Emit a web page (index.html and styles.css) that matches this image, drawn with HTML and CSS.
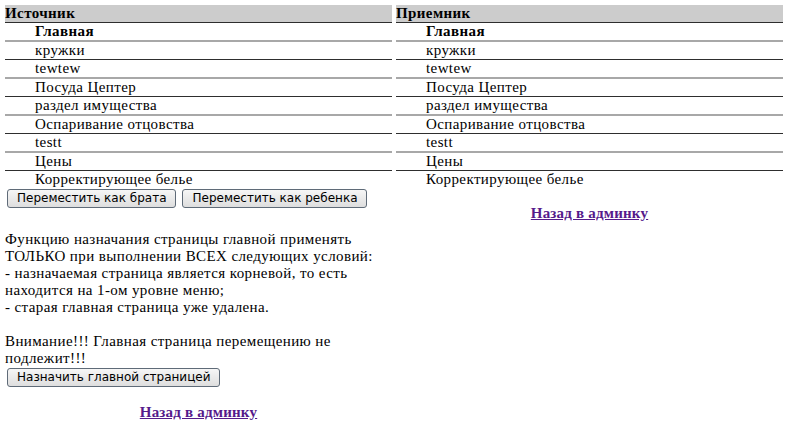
FILE: index.html
```html
<!DOCTYPE html>
<html>
<head>
<meta charset="utf-8">
<link rel="stylesheet" href="styles.css">
</head>
<body>
<div class="page">
  <div class="col">
    <div class="head">Источник</div>
    <div class="row main">Главная</div>
    <div class="row">кружки</div>
    <div class="row">tewtew</div>
    <div class="row">Посуда Цептер</div>
    <div class="row">раздел имущества</div>
    <div class="row">Оспаривание отцовства</div>
    <div class="row">testt</div>
    <div class="row">Цены</div>
    <div class="row last">Корректирующее белье</div>
    <div class="buttons">
      <button class="btn">Переместить как брата</button>
      <button class="btn">Переместить как ребенка</button>
    </div>
    <p class="note">Функцию назначания страницы главной применять ТОЛЬКО при выполнении ВСЕХ следующих условий:<br>- назначаемая страница является корневой, то есть находится на 1-ом уровне меню;<br>- старая главная страница уже удалена.<br><br>Внимание!!! Главная страница перемещению не подлежит!!!</p>
    <div class="buttons">
      <button class="btn">Назначить главной страницей</button>
    </div>
    <div class="back"><a href="#">Назад в админку</a></div>
  </div>
  <div class="col">
    <div class="head">Приемник</div>
    <div class="row main">Главная</div>
    <div class="row">кружки</div>
    <div class="row">tewtew</div>
    <div class="row">Посуда Цептер</div>
    <div class="row">раздел имущества</div>
    <div class="row">Оспаривание отцовства</div>
    <div class="row">testt</div>
    <div class="row">Цены</div>
    <div class="row last">Корректирующее белье</div>
    <div class="back"><a href="#">Назад в админку</a></div>
  </div>
</div>
</body>
</html>
```
FILE: styles.css
```css
html, body {
  margin: 0;
  padding: 0;
  background: #ffffff;
}
body {
  padding: 5px 0 0 5px;
  font-family: "Liberation Serif", "Times New Roman", serif;
  font-size: 15px;
  line-height: 17px;
  letter-spacing: 0.4px;
  color: #000000;
}
.page {
  display: flex;
  gap: 4px;
  align-items: flex-start;
}
.col {
  width: 387px;
  display: flex;
  flex-direction: column;
}
.head {
  height: 17px;
  background: #cccccc;
  font-weight: bold;
  border-bottom: 1px solid #2e2e2e;
  padding-left: 0;
}
.row {
  height: 17px;
  padding-left: 30px;
  border-bottom: 2px solid #a8a8a8;
}
.row:nth-of-type(odd) {
  border-bottom: 1px solid #2e2e2e;
}
.row.last {
  border-bottom: none;
}
.row.main {
  font-weight: bold;
}
.buttons {
  display: flex;
  gap: 6px;
  padding-left: 2px;
  margin-top: 1px;
}
.btn {
  font-family: "DejaVu Sans", Verdana, sans-serif;
  font-size: 12px;
  letter-spacing: 0;
  height: 19px;
  padding: 0 9px;
  line-height: 15px;
  color: #000;
  background: linear-gradient(#f6f6f6, #dedede);
  border: 1px solid #5f6b78;
  border-radius: 3px;
}
.note {
  margin: 23px 0 0 0;
}
.back {
  text-align: center;
  margin-top: 17px;
  font-weight: bold;
  letter-spacing: 0.2px;
}
.back a {
  color: #551a8b;
  text-decoration: underline;
}
```
